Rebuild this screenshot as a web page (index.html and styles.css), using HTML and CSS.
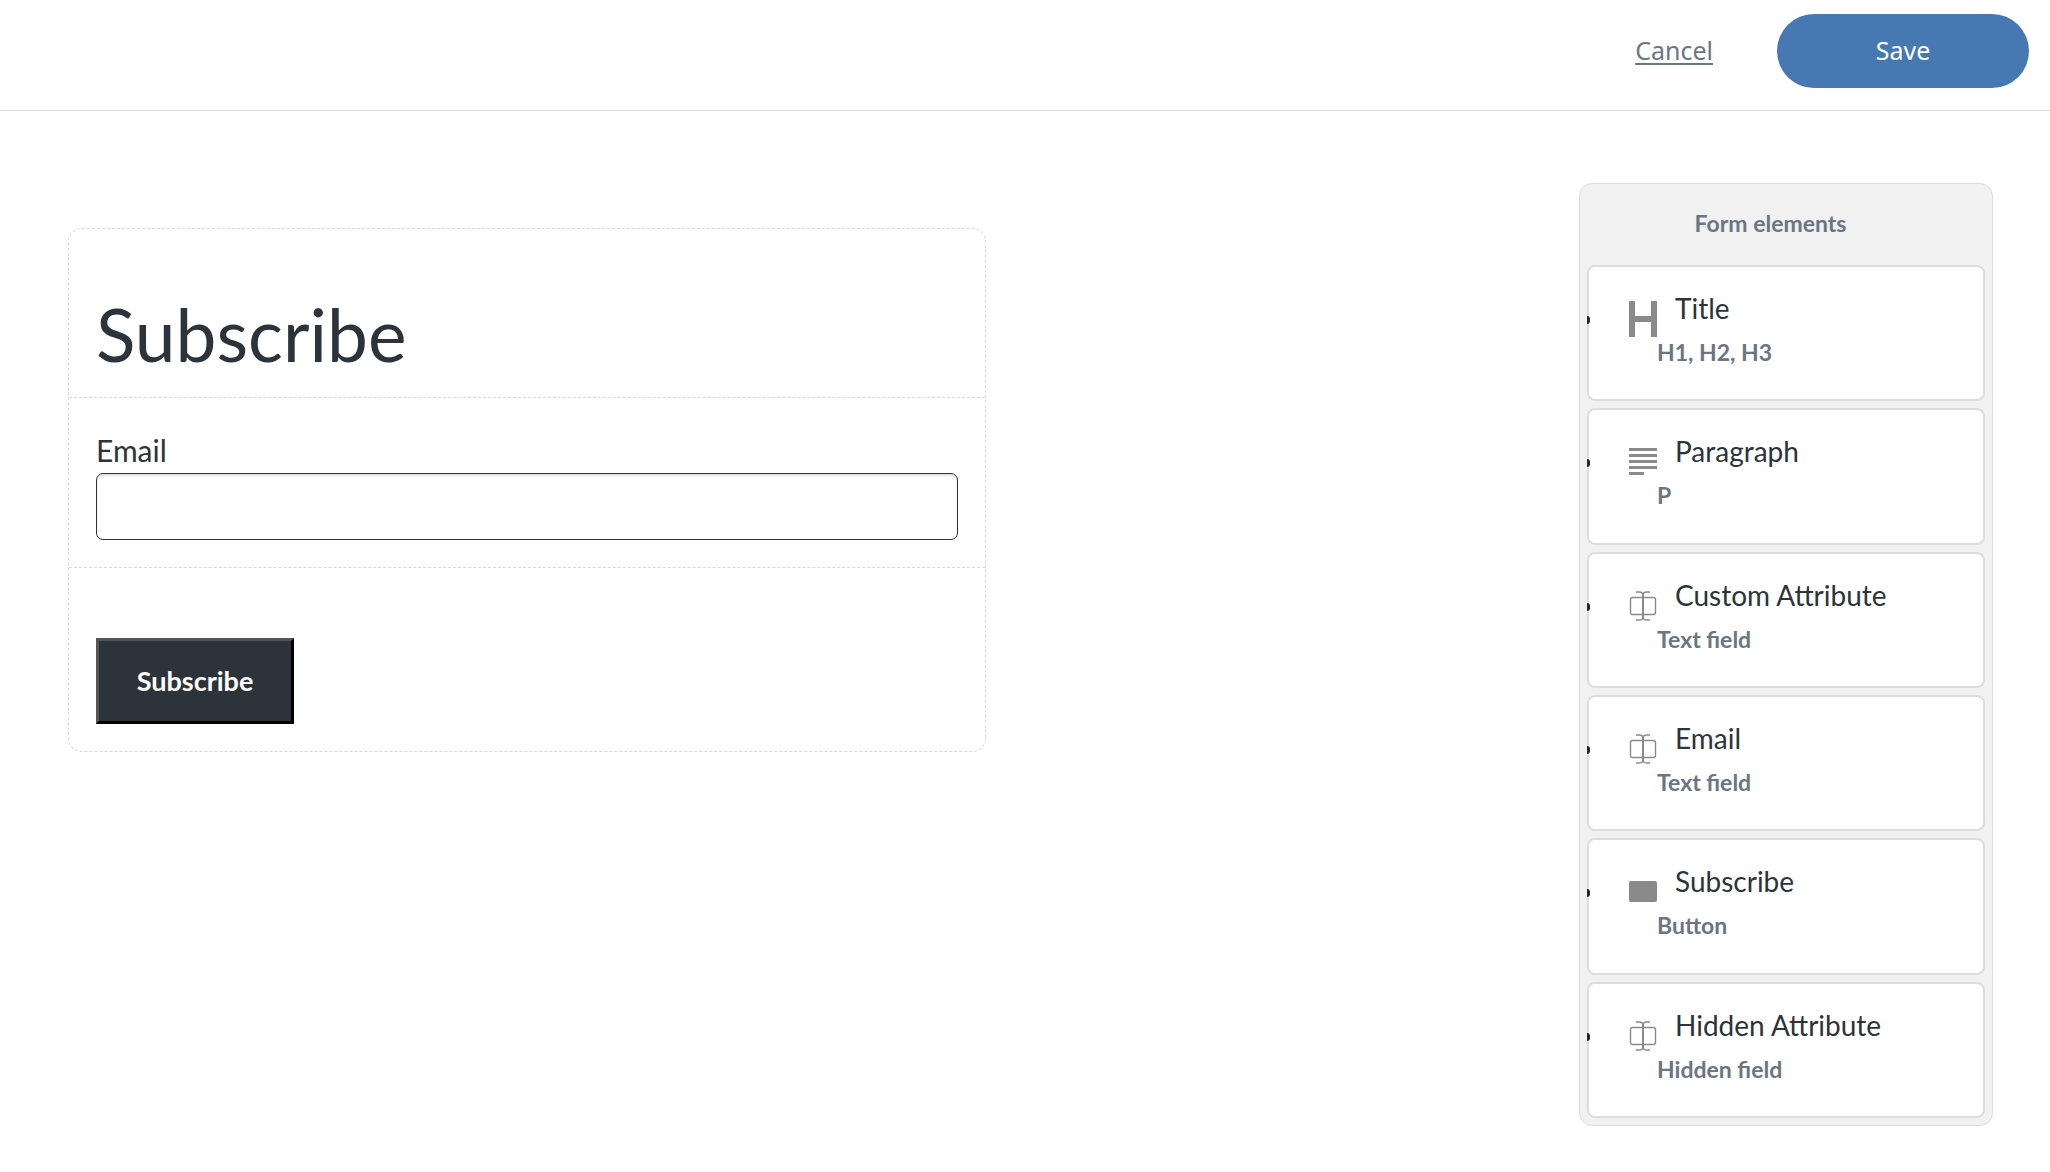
FILE: index.html
```html
<!DOCTYPE html>
<html lang="en">
<head>
<meta charset="utf-8">
<meta name="viewport" content="width=device-width, initial-scale=1">
<title>Subscribe form</title>
<link rel="stylesheet" href="styles.css">
</head>
<body>
<svg class="sprite" aria-hidden="true">
  <symbol id="icon-heading" viewBox="0 0 28 36">
    <path fill="currentColor" d="M0 0h6v15h16V0h6v36h-6V21H6v15H0z"/>
  </symbol>
  <symbol id="icon-paragraph" viewBox="0 0 28 36">
    <path fill="currentColor" d="M0 4h28v3H0zM0 10h28v3H0zM0 16h28v3H0zM0 22h28v3H0zM0 28h15v3H0z"/>
  </symbol>
  <symbol id="icon-field" viewBox="0 0 28 36">
    <g fill="none" stroke="currentColor" stroke-width="1.4">
      <rect x="1.500" y="9.500" width="25" height="17" rx="2"/>
      <path stroke-width="2" d="M14 6v24"/>
      <path d="M7 4h3Q14 4 14 7Q14 4 18 4h3M7 32h3Q14 32 14 29Q14 32 18 32h3"/>
    </g>
  </symbol>
  <symbol id="icon-button" viewBox="0 0 28 36">
    <rect fill="currentColor" y="7" width="28" height="21" rx="2"/>
  </symbol>
</svg>

<header class="toolbar">
  <a class="cancel" href="#">Cancel</a>
  <button class="save" type="button">Save</button>
</header>

<main class="editor">
  <form class="form">
    <div class="form-row form-row-title">
      <h1 class="form-title">Subscribe</h1>
    </div>
    <div class="form-row form-row-field">
      <label class="form-label" for="email">Email</label>
      <input class="form-input" id="email" type="email">
    </div>
    <div class="form-row">
      <button class="form-submit" type="button">Subscribe</button>
    </div>
  </form>

  <aside class="panel">
    <h2 class="panel-title">Form elements</h2>
    <ul class="elements">
      <li class="element">
        <svg class="icon"><use href="#icon-heading"/></svg>
        <span class="element-name">Title</span>
        <span class="element-type">H1, H2, H3</span>
      </li>
      <li class="element">
        <svg class="icon"><use href="#icon-paragraph"/></svg>
        <span class="element-name">Paragraph</span>
        <span class="element-type">P</span>
      </li>
      <li class="element">
        <svg class="icon"><use href="#icon-field"/></svg>
        <span class="element-name">Custom Attribute</span>
        <span class="element-type">Text field</span>
      </li>
      <li class="element">
        <svg class="icon"><use href="#icon-field"/></svg>
        <span class="element-name">Email</span>
        <span class="element-type">Text field</span>
      </li>
      <li class="element">
        <svg class="icon"><use href="#icon-button"/></svg>
        <span class="element-name">Subscribe</span>
        <span class="element-type">Button</span>
      </li>
      <li class="element">
        <svg class="icon"><use href="#icon-field"/></svg>
        <span class="element-name">Hidden Attribute</span>
        <span class="element-type">Hidden field</span>
      </li>
    </ul>
  </aside>
</main>
</body>
</html>
```

FILE: styles.css
```css
* {
  box-sizing: border-box;
}

body {
  margin: 0;
  background: #fff;
  color: #2c333b;
  font-family: Lato, "Liberation Sans", sans-serif;
  font-size: 28px;
}

.sprite {
  display: none;
}

/* Top bar */
.toolbar {
  display: flex;
  justify-content: flex-end;
  align-items: center;
  gap: 64px;
  padding: 14px 21px 22px;
  border-bottom: 1px solid #ddd;
  font-family: "Noto Sans", "Open Sans", sans-serif;
  font-size: 25px;
}

.cancel {
  padding-bottom: 3px;
  color: #6b7683;
  text-underline-offset: 3px;
  text-decoration-thickness: 2px;
}

.save {
  width: 252px;
  height: 74px;
  padding: 0 0 3px;
  border: 0;
  border-radius: 37px;
  background: #4678b2;
  color: #fff;
  font: inherit;
}

/* Two columns: form preview and element palette */
.editor {
  display: grid;
  grid-template-columns: minmax(0, 918px) 414px;
  justify-content: space-between;
  align-items: start;
  gap: 32px;
  padding: 72px 57px 32px 68px;
}

.form {
  margin-top: 45px;
  border: 1px dashed #d8d8d8;
  border-radius: 14px;
}

.form-row {
  padding: 70px 27px 27px;
}

.form-row + .form-row {
  border-top: 1px dashed #d8d8d8;
}

.form-row-field {
  padding-top: 34px;
}

.form-title {
  margin: 0 0 1px;
  font-size: 73px;
  line-height: 70px;
  font-weight: 400;
}

.form-label {
  display: block;
  margin-bottom: 5px;
  font-size: 30px;
  line-height: 36px;
}

.form-input {
  display: block;
  width: 100%;
  height: 67px;
  padding: 0 16px;
  border: 1px solid #2c333b;
  border-radius: 7px;
  background: #fff;
  box-shadow: inset 0 2px 2px rgba(0, 0, 0, 0.12);
  color: inherit;
  font: inherit;
}

.form-submit {
  display: block;
  width: 198px;
  height: 86px;
  padding: 0 0 2px;
  border: 3px solid;
  border-color: #555 #000 #000 #555;
  background: #2c333b;
  color: #fff;
  font: inherit;
  font-size: 27px;
  font-weight: 700;
}

/* Element palette */
.panel {
  padding: 0 7px;
  border: 1px solid #ddd;
  border-radius: 13px;
  background: #f1f1f1;
}

.panel-title {
  margin: 0;
  padding: 17px 31px 20px 0;
  color: #6b7683;
  font-size: 23px;
  line-height: 44px;
  font-weight: 700;
  text-align: center;
}

.elements {
  display: grid;
  grid-auto-rows: 1fr;
  gap: 7px;
  min-height: 860px;
  margin: 0;
  padding: 0 0 7px;
  list-style: none;
}

.element {
  position: relative;
  display: grid;
  grid-template-columns: 28px 1fr;
  grid-template-rows: 44px 44px;
  align-content: start;
  padding: 19px 40px;
  border: 2px solid #ddd;
  border-radius: 8px;
  background: #fff;
  line-height: 44px;
  cursor: grab;
}

.element::before {
  content: "";
  position: absolute;
  top: 49px;
  left: -2px;
  width: 3px;
  height: 8px;
  border-radius: 0 3px 3px 0;
  background: #23282e;
}

.icon {
  grid-row: 1 / 3;
  width: 28px;
  height: 36px;
  margin-top: 15px;
  color: #8a8a8a;
}

.element-name {
  padding-left: 18px;
}

.element-type {
  color: #6b7683;
  font-size: 23px;
  font-weight: 700;
}
```
